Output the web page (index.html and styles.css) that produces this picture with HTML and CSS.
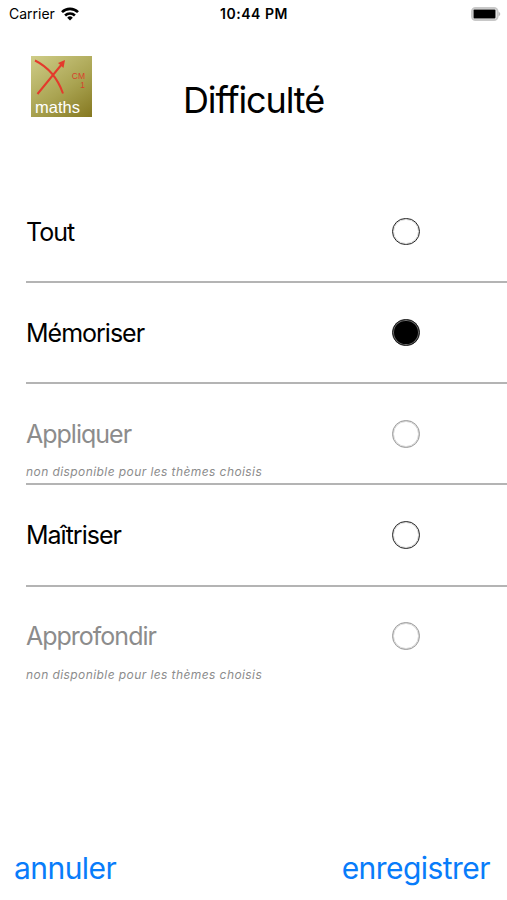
FILE: index.html
```html
<!DOCTYPE html>
<html lang="fr">
<head>
<meta charset="utf-8">
<title>Difficulté</title>
<link rel="stylesheet" href="styles.css">
</head>
<body>
<main class="screen">
  <div class="status">
    <div class="carrier"><span class="carrier-name">Carrier</span>
      <svg class="wifi" viewBox="0 0 18 14" width="18" height="14"><g fill="none" stroke="#000" stroke-width="2.6"><path d="M1 5.2a11.3 11.3 0 0 1 16 0"/><path d="M4.1 8.5a7 7 0 0 1 9.8 0"/></g><path d="M9 13.5 6.2 10.7a4 4 0 0 1 5.6 0Z"/></svg>
    </div>
    <time class="time">10:44 PM</time>
    <svg class="battery" viewBox="0 0 30 14" width="30" height="14"><rect x="1" y="1" width="25.500" height="12" rx="3.5" fill="#fff" stroke="#c8c8c8" stroke-width="2"/><rect x="2.5" y="2.5" width="22" height="9" rx="1"/><path d="M27.5 4.5q3.6 2.5 0 5Z" fill="#bbb"/></svg>
  </div>
  <header class="header">
    <div class="logo">
      <svg class="logo-mark" viewBox="0 0 61 61" width="61" height="61"><g fill="none" stroke="#e43a2c" stroke-width="2"><path d="M4 4.5C17 11 27 23 32 37.500M6.500 38 31 8"/></g><path d="M34 4 32.500 12 27 7Z" fill="#e43a2c"/></svg>
      <div class="level"><span>CM</span><span>1</span></div><span class="brand">maths</span>
    </div>
    <h1 class="title">Difficulté</h1>
  </header>
  <ul class="list">
    <li class="row"><span class="label">Tout</span><i class="radio"></i></li>
    <li class="row"><span class="label">Mémoriser</span><i class="radio on"></i></li>
    <li class="row off"><span class="label">Appliquer</span><i class="radio"></i><small class="note">non disponible pour les thèmes choisis</small></li>
    <li class="row"><span class="label">Maîtriser</span><i class="radio"></i></li>
    <li class="row off"><span class="label">Approfondir</span><i class="radio"></i><small class="note">non disponible pour les thèmes choisis</small></li>
  </ul>
  <footer class="footer"><a class="cancel">annuler</a><a class="save">enregistrer</a></footer>
</main>
</body>
</html>
```
FILE: styles.css
```css
* { box-sizing: border-box; }
body { margin: 0; background: #fff; color: #000; font-family: Inter, sans-serif; }
.screen { width: 507px; height: 900px; display: flex; flex-direction: column; overflow: hidden; }
.status { height: 27px; display: grid; grid-template-columns: 1fr auto 1fr; align-items: center; padding: 0 6px 0 9px; font-size: 14px; }
.carrier { display: flex; align-items: center; gap: 6px; }
.time { font-weight: 600; letter-spacing: .55px; margin-left: -2px; }
.battery { justify-self: end; }
.header { height: 155px; padding: 29px 31px 0; display: grid; grid-template-columns: 61px 1fr 61px; }
.logo { position: relative; width: 61px; height: 61px; background: linear-gradient(145deg, #cfcd88, #aaa452 55%, #857820); font-family: "Liberation Sans", sans-serif; }
.logo-mark { display: block; }
.level { position: absolute; right: 7px; top: 15px; display: flex; flex-direction: column; align-items: flex-end; color: #d9402c; font-size: 8.5px; line-height: 10px; }
.level span:last-child { line-height: 8px; }
.brand { position: absolute; left: 4px; bottom: 1px; color: #fff; font-size: 16.5px; line-height: 18px; }
.title { margin: 22px 0 0; font-size: 36px; line-height: 44px; font-weight: 400; text-align: center; letter-spacing: -1.1px; }
.list { margin: 0; padding: 0 0 0 26px; list-style: none; }
.row { height: 101.15px; border-bottom: 2px solid #b4b4b4; display: grid; grid-template-columns: 366px 27px; grid-template-rows: 66px 10px; padding-top: 16.5px; align-items: center; align-content: start; }
.row:last-child { border-bottom: 0; }
.label { font-size: 25px; letter-spacing: -1px; }
.radio { width: 27.5px; height: 27.5px; border: 1.5px solid #222; border-radius: 50%; outline: 1px solid #3333; outline-offset: -2px; }
.on { background: #000; box-shadow: inset 0 0 0 1px #777; }
.off { color: #8c8c8c; }
.off .radio { border-color: #999; }
.note { font-size: 12px; font-style: italic; letter-spacing: .42px; white-space: nowrap; }
.footer { margin-top: auto; height: 64px; padding: 0 17px 0 14px; display: flex; justify-content: space-between; align-items: center; font-size: 30px; color: #087cfa; letter-spacing: -.55px; }
```
